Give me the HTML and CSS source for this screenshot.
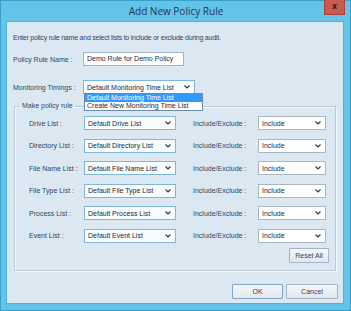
FILE: index.html
```html
<!DOCTYPE html>
<html>
<head>
<meta charset="utf-8">
<link rel="stylesheet" href="styles.css">
</head>
<body>
<div class="window">
  <div class="titlebar">
    <span class="title">Add New Policy Rule</span>
    <span class="close">x</span>
  </div>
  <div class="client">
    <p class="intro">Enter policy rule name and select lists to include or exclude during audit.</p>
    <div class="field-row name-row">
      <span class="label top-label">Policy Rule Name :</span>
      <div class="textbox">Demo Rule for Demo Policy</div>
    </div>
    <div class="field-row monitor-row">
      <span class="label top-label">Monitoring Timings :</span>
      <div class="combo combo-monitor focus">
        <span>Default Monitoring Time List</span>
        <svg class="chev" width="6" height="4" viewBox="0 0 6 4"><polyline points="0.5,0.5 3,3 5.5,0.5" fill="none" stroke="#333" stroke-width="1.1"/></svg>
      </div>
      <ul class="dropdown">
        <li class="selected">Default Monitoring Time List</li>
        <li>Create New Monitoring Time List</li>
      </ul>
    </div>
    <fieldset class="group">
      <legend>Make policy rule</legend>
      <div class="rules">
        <span class="label">Drive List :</span>
        <div class="combo combo-list"><span>Default Drive List</span><svg class="chev" width="6" height="4" viewBox="0 0 6 4"><polyline points="0.5,0.5 3,3 5.5,0.5" fill="none" stroke="#333" stroke-width="1.1"/></svg></div>
        <span class="label">Include/Exclude :</span>
        <div class="combo combo-inc"><span>Include</span><svg class="chev" width="6" height="4" viewBox="0 0 6 4"><polyline points="0.5,0.5 3,3 5.5,0.5" fill="none" stroke="#333" stroke-width="1.1"/></svg></div>

        <span class="label">Directory List :</span>
        <div class="combo combo-list"><span>Default Directory List</span><svg class="chev" width="6" height="4" viewBox="0 0 6 4"><polyline points="0.5,0.5 3,3 5.5,0.5" fill="none" stroke="#333" stroke-width="1.1"/></svg></div>
        <span class="label">Include/Exclude :</span>
        <div class="combo combo-inc"><span>Include</span><svg class="chev" width="6" height="4" viewBox="0 0 6 4"><polyline points="0.5,0.5 3,3 5.5,0.5" fill="none" stroke="#333" stroke-width="1.1"/></svg></div>

        <span class="label">File Name List :</span>
        <div class="combo combo-list"><span>Default File Name List</span><svg class="chev" width="6" height="4" viewBox="0 0 6 4"><polyline points="0.5,0.5 3,3 5.5,0.5" fill="none" stroke="#333" stroke-width="1.1"/></svg></div>
        <span class="label">Include/Exclude :</span>
        <div class="combo combo-inc"><span>Include</span><svg class="chev" width="6" height="4" viewBox="0 0 6 4"><polyline points="0.5,0.5 3,3 5.5,0.5" fill="none" stroke="#333" stroke-width="1.1"/></svg></div>

        <span class="label">File Type List :</span>
        <div class="combo combo-list"><span>Default File Type List</span><svg class="chev" width="6" height="4" viewBox="0 0 6 4"><polyline points="0.5,0.5 3,3 5.5,0.5" fill="none" stroke="#333" stroke-width="1.1"/></svg></div>
        <span class="label">Include/Exclude :</span>
        <div class="combo combo-inc"><span>Include</span><svg class="chev" width="6" height="4" viewBox="0 0 6 4"><polyline points="0.5,0.5 3,3 5.5,0.5" fill="none" stroke="#333" stroke-width="1.1"/></svg></div>

        <span class="label">Process List :</span>
        <div class="combo combo-list"><span>Default Process List</span><svg class="chev" width="6" height="4" viewBox="0 0 6 4"><polyline points="0.5,0.5 3,3 5.5,0.5" fill="none" stroke="#333" stroke-width="1.1"/></svg></div>
        <span class="label">Include/Exclude :</span>
        <div class="combo combo-inc"><span>Include</span><svg class="chev" width="6" height="4" viewBox="0 0 6 4"><polyline points="0.5,0.5 3,3 5.5,0.5" fill="none" stroke="#333" stroke-width="1.1"/></svg></div>

        <span class="label">Event List :</span>
        <div class="combo combo-list"><span>Default Event List</span><svg class="chev" width="6" height="4" viewBox="0 0 6 4"><polyline points="0.5,0.5 3,3 5.5,0.5" fill="none" stroke="#333" stroke-width="1.1"/></svg></div>
        <span class="label">Include/Exclude :</span>
        <div class="combo combo-inc"><span>Include</span><svg class="chev" width="6" height="4" viewBox="0 0 6 4"><polyline points="0.5,0.5 3,3 5.5,0.5" fill="none" stroke="#333" stroke-width="1.1"/></svg></div>
      </div>
      <div class="reset-row"><button class="btn reset">Reset All</button></div>
    </fieldset>
    <div class="actions">
      <button class="btn ok">OK</button>
      <button class="btn cancel">Cancel</button>
    </div>
  </div>
</div>
</body>
</html>
```
FILE: styles.css
```css
* { box-sizing: border-box; }
html, body { margin: 0; padding: 0; }
body {
  width: 351px;
  height: 311px;
  overflow: hidden;
  font-family: "Liberation Sans", Arial, sans-serif;
  font-size: 7px;
  color: #2f4464;
  background: #62c3e6;
}
.window {
  width: 351px;
  height: 311px;
  display: flex;
  flex-direction: column;
  background: #64c4e8;
  border: 1px solid #3a9fcc;
  padding: 0 6px 6px 5px;
}
.titlebar {
  height: 20px;
  flex: none;
  display: flex;
  align-items: center;
  justify-content: center;
  position: relative;
}
.title {
  font-family: "Open Sans", "Liberation Sans", sans-serif;
  font-size: 10px;
  color: #1d3558;
  margin-left: 2px;
  margin-top: -1px;
}
.close {
  position: absolute;
  right: -1px;
  top: -1px;
  width: 21px;
  height: 15px;
  background: #c95a4c;
  border: 1px solid #a8423a;
  border-top: none;
  color: #1a1a1a;
  font-weight: bold;
  font-size: 9px;
  line-height: 13px;
  text-align: center;
}
.client {
  flex: 1;
  background: #dce8f1;
  border: 1px solid #4fb0d8;
  padding: 0 6px 0 6px;
  position: relative;
  display: flex;
  flex-direction: column;
}
.intro {
  margin: 11px 0 0 0;
  line-height: 9px;
  letter-spacing: -0.22px;
}
.field-row {
  display: flex;
  align-items: center;
  position: relative;
}
.name-row { margin-top: 10px; }
.monitor-row { margin-top: 14px; }
.label { white-space: nowrap; line-height: 9px; }
.top-label { width: 70px; flex: none; }
.textbox {
  width: 101px;
  height: 14px;
  background: #fff;
  border: 1px solid #9eb4c8;
  padding: 0 3px;
  line-height: 12px;
  color: #1a2a40;
}
.combo {
  height: 14px;
  background: #fff;
  border: 1px solid #a9b7c4;
  display: flex;
  align-items: center;
  justify-content: space-between;
  padding: 0 4px 0 3px;
  color: #1a2a40;
  white-space: nowrap;
}
.combo.focus, .combo-list { border-color: #7fb6dc; background: #f8fcff; }
.combo-monitor { width: 112px; }
.chev { flex: none; }
.dropdown {
  position: absolute;
  left: 71px;
  top: 13px;
  width: 119px;
  margin: 0;
  padding: 0;
  list-style: none;
  background: #fff;
  border: 1px solid #6e8aa8;
  z-index: 2;
  color: #1a2a40;
}
.dropdown li {
  height: 8px;
  line-height: 8px;
  padding-left: 2px;
  white-space: nowrap;
}
.dropdown li.selected { background: #3399ff; color: #fff; }
.group {
  margin: 8px 1px 0 1px;
  padding: 6px 8px 4px 14px;
  border: 1px solid #b9cad8;
  box-shadow: inset 1px 1px 0 #f2f7fb, 1px 1px 0 #f2f7fb;
  height: 169px;
  min-width: 0;
}
.group legend {
  padding: 0 2px;
  margin-left: -9px;
  line-height: 8px;
}
.rules {
  display: grid;
  grid-template-columns: 55px 92px 82px 68px;
  row-gap: 8.5px;
  align-items: center;
}
.rules .label:nth-child(4n+3) { padding-left: 17px; }
.reset-row {
  display: flex;
  justify-content: flex-end;
  margin-top: 5px;
  margin-right: -2px;
}
.btn {
  font-family: "Liberation Sans", Arial, sans-serif;
  font-size: 7px;
  color: #2f4464;
  height: 15px;
  padding: 0;
  border: 1px solid #a6b3c0;
  background: linear-gradient(#f3f6f9, #e2e8ee);
  border-radius: 1px;
}
.reset { width: 40px; }
.actions {
  display: flex;
  justify-content: flex-end;
  gap: 3px;
  margin-top: 13px;
  margin-right: -1px;
}
.ok { width: 51px; border-color: #7fa6c8; }
.cancel { width: 52px; }
```
